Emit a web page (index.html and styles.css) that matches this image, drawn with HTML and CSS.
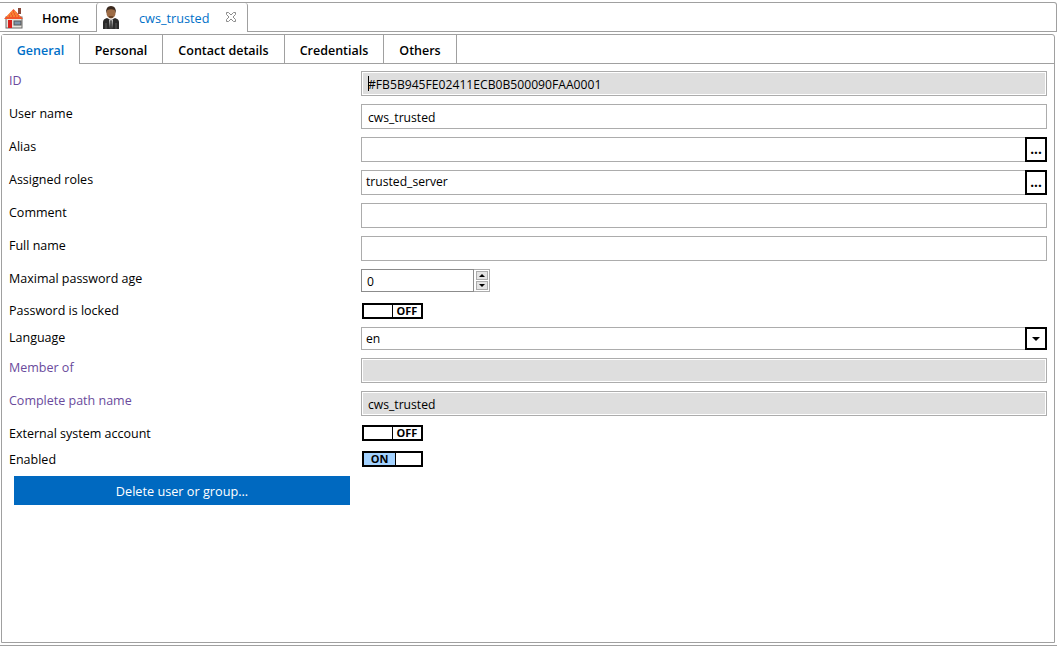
FILE: index.html
```html
<!doctype html>
<html>
<head>
  <title>cws_trusted</title>
  <link rel="stylesheet" href="styles.css">
</head>
<body>
  <div class="window">
    <div class="doc-tabs">
      <div class="doc-tab home">
        <svg class="house" width="20" height="22" viewBox="0 0 20 22">
          <rect x="14" y="1" width="3" height="6" fill="#8a4a3a"/>
          <rect x="2" y="10" width="16" height="11" fill="#e8e4dc" stroke="#6a6a6a"/>
          <path d="M0 12 L9.5 2 L19 12 Z" fill="#f2552a"/>
          <path d="M3 9h13M5 7h9M7 5h5" stroke="#f9b13a" stroke-width="1" stroke-dasharray="2 1"/>
          <rect x="4" y="13" width="4" height="8" fill="#d8201c"/>
          <rect x="10" y="14" width="7" height="4" fill="#7d93a8" stroke="#555"/>
        </svg>
        <span>Home</span>
      </div>
      <div class="doc-tab current">
        <svg class="person" width="16" height="23" viewBox="0 0 16 23">
          <path d="M0 23 V16 Q0 13 4 12 L8 14 L12 12 Q16 13 16 16 V23 Z" fill="#2a2a2a"/>
          <path d="M6 13 L8 15 L10 13 L9 23 H7 Z" fill="#d8d8d8"/>
          <path d="M7.400 15 H8.600 L8.800 23 H7.200 Z" fill="#111"/>
          <path d="M3 17v6M13 17v6" stroke="#5c5c5c"/>
          <ellipse cx="8" cy="6.500" rx="4.600" ry="6" fill="#9c6b45"/>
          <path d="M3.200 7 Q2.600 0 8 0 Q13.400 0 12.800 7 L11.600 4 Q8 2.600 4.400 4 Z" fill="#3b2a20"/>
          <path d="M5.500 10 H10.500 L9.500 12 H6.500 Z" fill="#6b4529"/>
        </svg>
        <span class="doc-title">cws_trusted</span>
        <svg class="close" width="12" height="12" viewBox="0 0 12 12">
          <path d="M1.500 1.500h2l2.500 2.500 2.500-2.500h2v2l-2.500 2.500 2.500 2.500v2h-2l-2.500-2.500-2.500 2.500h-2v-2l2.500-2.500-2.500-2.500z" fill="#fff" stroke="#8c8c8c"/>
        </svg>
      </div>
    </div>
    <div class="panel">
      <div class="tabs">
        <div class="tab active">General</div>
        <div class="tab">Personal</div>
        <div class="tab">Contact details</div>
        <div class="tab">Credentials</div>
        <div class="tab">Others</div>
      </div>
      <div class="form">
        <div class="row">
          <label class="readonly">ID</label>
          <div class="field disabled"><span class="caret"></span>#FB5B945FE02411ECB0B500090FAA0001</div>
        </div>
        <div class="row">
          <label>User name</label>
          <div class="field">cws_trusted</div>
        </div>
        <div class="row">
          <label>Alias</label>
          <div class="field picker"><span class="value"></span><span class="more">...</span></div>
        </div>
        <div class="row">
          <label>Assigned roles</label>
          <div class="field picker"><span class="value">trusted_server</span><span class="more">...</span></div>
        </div>
        <div class="row">
          <label>Comment</label>
          <div class="field"></div>
        </div>
        <div class="row">
          <label>Full name</label>
          <div class="field"></div>
        </div>
        <div class="row row-spin">
          <label>Maximal password age</label>
          <div class="spinner">
            <div class="spin-value">0</div>
            <div class="spin-btns">
              <span class="spin-btn"><i class="arrow-up"></i></span>
              <span class="spin-btn"><i class="arrow-down"></i></span>
            </div>
          </div>
        </div>
        <div class="row row-toggle first">
          <label>Password is locked</label>
          <div class="toggle"><span class="toggle-gap"></span><span class="toggle-off">OFF</span></div>
        </div>
        <div class="row row-lang">
          <label>Language</label>
          <div class="field picker"><span class="value">en</span><span class="more"><i class="arrow-down big"></i></span></div>
        </div>
        <div class="row">
          <label class="readonly">Member of</label>
          <div class="field disabled"></div>
        </div>
        <div class="row row-path">
          <label class="readonly">Complete path name</label>
          <div class="field disabled">cws_trusted</div>
        </div>
        <div class="row row-toggle">
          <label>External system account</label>
          <div class="toggle"><span class="toggle-gap"></span><span class="toggle-off">OFF</span></div>
        </div>
        <div class="row row-toggle">
          <label>Enabled</label>
          <div class="toggle"><span class="toggle-on">ON</span><span class="toggle-gap"></span></div>
        </div>
        <button class="delete">Delete user or group...</button>
      </div>
    </div>
  </div>
</body>
</html>
```

FILE: styles.css
```css
html, body { margin: 0; padding: 0; background: #fff; }
body {
  width: 1062px;
  height: 647px;
  overflow: hidden;
  font-family: "Open Sans", "Noto Sans", sans-serif;
  font-size: 12.5px;
  color: #000;
}

.window {
  width: 1057px;
  height: 646px;
  box-sizing: border-box;
  border-bottom: 1px solid #a0a0a0;
  display: flex;
  flex-direction: column;
}

/* top tab strip */
.doc-tabs {
  height: 30px;
  margin-top: 2px;
  box-sizing: border-box;
  display: flex;
  border-top: 1px solid #a0a0a0;
  border-right: 1px solid #a0a0a0;
  border-bottom: 1px solid #a0a0a0;
  border-top-right-radius: 3px;
}
.doc-tab {
  display: flex;
  align-items: center;
  height: 29px;
  box-sizing: border-box;
  font-weight: 600;
  font-size: 12.7px;
}
.doc-tab.home { width: 96px; padding-left: 4px; }
.doc-tab.home span { margin-left: 18px; padding-top: 1px; }
.house { flex: none; }
.doc-tab.current {
  width: 152px;
  height: 29px;
  padding-left: 6px;
  border-left: 1px solid #a0a0a0;
  border-right: 1px solid #a0a0a0;
  border-top-left-radius: 3px;
  border-top-right-radius: 3px;
  font-weight: 400;
  background: #fff;
}
.person { flex: none; }
.doc-title { color: #0070c8; margin-left: 20px; padding-top: 1px; }
.close { margin-left: 16px; margin-top: -2px; }

/* inner panel */
.panel {
  flex: 1;
  margin: 2px 2px 2px 1px;
  border: 1px solid #a0a0a0;
  border-top-right-radius: 3px;
  border-top-left-radius: 3px;
  display: flex;
  flex-direction: column;
}
.tabs {
  display: grid;
  grid-template-columns: 78px 83px 122px 99px 73px;
  height: 29px;
  flex: none;
  box-sizing: border-box;
  border-bottom: 1px solid #a0a0a0;
}
.tab {
  box-sizing: border-box;
  height: 28px;
  border-right: 1px solid #a0a0a0;
  padding-top: 2px;
  line-height: 28px;
  text-align: center;
  font-weight: 600;
  white-space: nowrap;
}
.tab.active {
  color: #0070c8;
  height: 29px;
  background: #fff;
}

/* form rows */
.form { padding-top: 7px; }
.row {
  display: flex;
  height: 25px;
  margin-bottom: 8px;
}
.row label {
  width: 359px;
  flex: none;
  padding-left: 7px;
  box-sizing: border-box;
  line-height: 20px;
}
.row label.readonly { color: #6a4a9c; }
.field {
  width: 686px;
  box-sizing: border-box;
  height: 25px;
  border: 1px solid #acacac;
  padding: 0 6px;
  font-size: 12.15px;
  line-height: 25px;
  white-space: nowrap;
}
.field.disabled {
  background: #dedede;
  box-shadow: inset 0 0 0 1px #fff;
  position: relative;
}
.caret {
  position: absolute;
  left: 6px;
  top: 4px;
  height: 15px;
  border-left: 1px solid #000;
}
.field.picker {
  display: flex;
  padding: 0;
  border: none;
}
.value {
  flex: 1;
  border: 1px solid #acacac;
  border-right: none;
  padding: 0 4px;
  line-height: 21px;
}
.more {
  width: 22px;
  box-sizing: border-box;
  border: 2px solid #000;
  display: flex;
  align-items: center;
  justify-content: center;
  font-size: 13.5px;
  font-weight: 700;
  line-height: 1;
}

.row-spin { height: 23px; margin-bottom: 11px; }
.spinner { display: flex; width: 129px; height: 23px; }
.spin-value {
  width: 113px;
  box-sizing: border-box;
  border: 1px solid #8c8c8c;
  padding: 0 5px;
  font-size: 12.15px;
  line-height: 24px;
}
.spin-btns {
  width: 16px;
  box-sizing: border-box;
  display: flex;
  flex-direction: column;
  border: 1px solid #acacac;
  border-left: none;
  padding: 1px 1px 1px 2px;
  gap: 1px;
}
.spin-btn {
  flex: 1;
  background: #e4e4e4;
  border: 1px solid #acacac;
  display: flex;
  align-items: center;
  justify-content: center;
}
.arrow-up, .arrow-down {
  display: block;
  width: 0;
  height: 0;
  border-left: 3px solid transparent;
  border-right: 3px solid transparent;
}
.arrow-up { border-bottom: 3px solid #000; }
.arrow-down { border-top: 3px solid #000; }
.arrow-down.big {
  border-left-width: 4px;
  border-right-width: 4px;
  border-top-width: 4px;
}

.row-path { margin-bottom: 9px; }
.row-toggle { height: 16px; margin-bottom: 10px; }
.row-toggle label { line-height: 17px; }
.row-toggle.first { margin-bottom: 8px; }
.row-toggle.first label { line-height: 15px; }
.row-lang { height: 23px; }
.row-lang label { line-height: 21px; }
.row-lang .field { height: 23px; }
.toggle {
  margin-left: 1px;
  width: 61px;
  height: 16px;
  box-sizing: border-box;
  border: 2px solid #000;
  display: flex;
  font-size: 11px;
  font-weight: 700;
  line-height: 12px;
}
.toggle-gap { flex: 1; }
.toggle-off {
  width: 29px;
  box-sizing: border-box;
  border-left: 1px solid #000;
  text-align: center;
}
.toggle-on {
  width: 32px;
  box-sizing: border-box;
  border-right: 1px solid #000;
  background: #a3d2ff;
  text-align: center;
}

.delete {
  display: block;
  margin: -1px 0 0 12px;
  width: 336px;
  height: 29px;
  border: none;
  background: #0069c0;
  color: #fff;
  font: inherit;
  font-size: 12.7px;
  padding: 0;
}
```
